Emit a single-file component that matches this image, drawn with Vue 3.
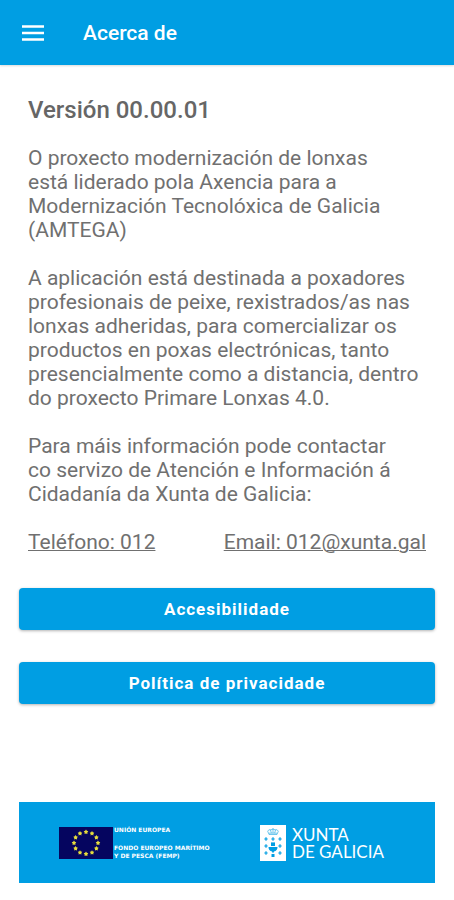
<template>
  <div class="screen">
    <header class="toolbar">
      <button class="menu-button" type="button" aria-label="Menú">
        <svg viewBox="0 0 24 18" width="24" height="18" aria-hidden="true">
          <path d="M1 2.5h22M1 9h22M1 15.5h22" fill="none" stroke="#fff" stroke-width="2.4" />
        </svg>
      </button>
      <h1 class="toolbar-title">Acerca de</h1>
    </header>

    <main class="content">
      <section class="about">
        <h2 class="version">Versión {{ version }}</h2>
        <p v-for="(lines, i) in paragraphs" :key="i">
          <template v-for="(line, j) in lines" :key="j"><br v-if="j > 0" />{{ line }}</template>
        </p>
        <div class="contact">
          <a href="tel:012">Teléfono: 012</a>
          <a href="mailto:012@xunta.gal">Email: 012@xunta.gal</a>
        </div>
      </section>

      <div class="actions">
        <button v-for="action in actions" :key="action" class="action" type="button">{{ action }}</button>
      </div>

      <footer class="sponsors">
        <div class="eu">
          <svg class="eu-flag" viewBox="0 0 54 32" width="54" height="32" aria-hidden="true">
            <rect width="54" height="32" fill="#05055f" />
            <polygon
              v-for="(star, i) in stars"
              :key="i"
              :points="star"
              fill="#e6dc3c"
            />
          </svg>
          <div class="eu-text">
            <span>UNIÓN EUROPEA</span>
            <span>FONDO EUROPEO MARÍTIMO<br />Y DE PESCA (FEMP)</span>
          </div>
        </div>
        <div class="xunta">
          <svg class="xunta-shield" viewBox="0 0 26 36" width="26" height="36" aria-hidden="true">
            <rect width="26" height="36" fill="#fff" />
            <g fill="none" stroke="#009ee3" stroke-width="0.7" opacity="0.8">
              <path d="M9 9.5L7.7 6.2Q8.5 4 11 4.8Q13 3.4 15 4.8Q17.5 4 18.3 6.2L17 9.5Z" />
              <path d="M9 8.2h8M13 3v5M10.5 5l.8 3M15.5 5l-.8 3" />
            </g>
            <g fill="#009ee3">
              <path
                v-for="([x, y], i) in crosses"
                :key="i"
                :d="`M${x - 0.6} ${y - 1.7}h1.2v1.1h1.1v1.2h-1.1v1.1h-1.2v-1.1h-1.1v-1.2h1.1z`"
              />
              <rect x="11" y="17.4" width="4" height="3.6" />
              <path d="M8.5 22h9q0 3.8-3.6 4.4v1h-1.8v-1q-3.6-.6-3.6-4.4z" />
              <path d="M11.5 29h3v3h-3z" />
            </g>
          </svg>
          <div class="xunta-text">
            <span>XUNTA</span>
            <span>DE GALICIA</span>
          </div>
        </div>
      </footer>
    </main>
  </div>
</template>

<script setup>
const version = '00.00.01'

const paragraphs = [
  [
    'O proxecto modernización de lonxas',
    'está liderado pola Axencia para a',
    'Modernización Tecnolóxica de Galicia',
    '(AMTEGA)'
  ],
  [
    'A aplicación está destinada a poxadores',
    'profesionais de peixe, rexistrados/as nas',
    'lonxas adheridas, para comercializar os',
    'productos en poxas electrónicas, tanto',
    'presencialmente como a distancia, dentro',
    'do proxecto Primare Lonxas 4.0.'
  ],
  [
    'Para máis información pode contactar',
    'co servizo de Atención e Información á',
    'Cidadanía da Xunta de Galicia:'
  ]
]

const actions = ['Accesibilidade', 'Política de privacidade']

// Crosses around the chalice on the coat of arms
const crosses = [
  [6, 14], [13, 14], [20, 14],
  [6, 21], [20, 21],
  [6, 28], [20, 28]
]

// Twelve five-pointed stars in a circle, as on the EU flag
const stars = Array.from({ length: 12 }, (_, i) => {
  const angle = (i * Math.PI) / 6
  const cx = 27 + 12 * Math.sin(angle)
  const cy = 16 - 11 * Math.cos(angle)
  return Array.from({ length: 10 }, (_, k) => {
    const r = k % 2 ? 1.4 : 2.4
    const a = (k * Math.PI) / 5
    return `${(cx + r * Math.sin(a)).toFixed(2)},${(cy - r * Math.cos(a)).toFixed(2)}`
  }).join(' ')
})
</script>

<style>
body {
  margin: 0;
  background: #fff;
}
</style>

<style scoped>
.screen {
  min-height: 100vh;
  display: flex;
  flex-direction: column;
  font-family: Roboto, 'Liberation Sans', sans-serif;
  color: #707070;
}

.toolbar {
  display: flex;
  align-items: center;
  gap: 38px;
  height: 65px;
  padding: 0 21px;
  background: #009ee3;
  box-shadow: 0 1px 2px rgba(0, 0, 0, 0.15);
}

.menu-button {
  display: flex;
  padding: 0;
  border: 0;
  background: none;
  cursor: pointer;
}

.toolbar-title {
  margin: 0;
  font-size: 21px;
  font-weight: 500;
  line-height: 24px;
  color: #fff;
}

.content {
  flex: 1;
  display: flex;
  flex-direction: column;
  padding: 33px 19px 17px;
}

.about {
  display: flex;
  flex-direction: column;
  gap: 24px;
  padding: 0 9px;
  font-size: 21px;
  line-height: 24px;
}

.version {
  margin: 0;
  font-size: 24px;
  font-weight: 500;
  line-height: 24px;
  color: #666;
}

.about p {
  margin: 0;
}

.contact {
  display: flex;
  justify-content: space-between;
}

.contact a {
  color: inherit;
  text-decoration: underline;
  text-decoration-thickness: 1px;
}

.actions {
  display: flex;
  flex-direction: column;
  gap: 32px;
  margin: 34px 0 32px;
}

.action {
  height: 42px;
  border: 0;
  border-radius: 4px;
  background: #009ee3;
  box-shadow: 0 1px 3px rgba(0, 0, 0, 0.3);
  font-family: inherit;
  font-size: 17px;
  font-weight: 700;
  letter-spacing: 1px;
  color: #fff;
  cursor: pointer;
}

.sponsors {
  display: flex;
  align-items: center;
  justify-content: space-between;
  height: 81px;
  margin-top: auto;
  padding: 0 51px 0 40px;
  background: #009ee3;
  color: #fff;
}

.eu,
.xunta {
  display: flex;
  align-items: center;
}

.eu {
  gap: 1px;
}

.eu-text {
  display: flex;
  flex-direction: column;
  gap: 10px;
  font-family: 'DejaVu Sans', Verdana, sans-serif;
  font-size: 6px;
  font-weight: 700;
  line-height: 8px;
  white-space: nowrap;
}

.xunta {
  gap: 6px;
}

.xunta-text {
  display: flex;
  flex-direction: column;
  font-family: Lato, sans-serif;
  font-size: 17px;
  line-height: 17px;
  white-space: nowrap;
}
</style>
